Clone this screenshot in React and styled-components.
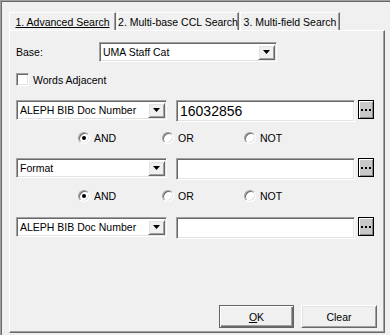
import React from 'react';
import styled, { createGlobalStyle, css } from 'styled-components';

const GlobalStyle = createGlobalStyle`
  html, body {
    margin: 0;
    padding: 0;
    background: #f0f0f0;
  }
`;

const sunken = css`
  border: 1px solid;
  border-color: #a0a0a0 #fff #fff #a0a0a0;
  box-shadow: inset 1px 1px 0 #696969, inset -1px -1px 0 #e3e3e3;
`;

const raised = css`
  border: 1px solid;
  border-color: #fff #696969 #696969 #fff;
  box-shadow: inset 1px 1px 0 #e3e3e3, inset -1px -1px 0 #a0a0a0;
`;

const fields = [
  { name: 'ALEPH BIB Doc Number', value: '16032856' },
  { name: 'Format', value: '' },
  { name: 'ALEPH BIB Doc Number', value: '' },
];

const tabs = [
  { label: '1. Advanced Search', w: 107, active: true },
  { label: '2. Multi-base CCL Search', w: 122 },
  { label: '3. Multi-field Search', w: 100 },
];

export default function App() {
  return (
    <>
      <GlobalStyle />
      <Window>
        <TabStrip>
          {tabs.map((t) => (
            <Tab key={t.label} $w={t.w} $active={t.active}>
              {t.label}
            </Tab>
          ))}
        </TabStrip>
        <Panel>
          <BaseRow>
            <Label>Base:</Label>
            <Select $w={178}>
              <SelectText>UMA Staff Cat</SelectText>
              <DropButton>
                <Arrow />
              </DropButton>
            </Select>
          </BaseRow>
          <CheckRow>
            <CheckBox />
            <span>Words Adjacent</span>
          </CheckRow>
          {fields.map((f, i) => (
            <React.Fragment key={i}>
              <FieldRow $gap={i === 2 ? 15 : 14}>
                <Select $w={151}>
                  <SelectText>{f.name}</SelectText>
                  <DropButton>
                    <Arrow />
                  </DropButton>
                </Select>
                <TextInput>{f.value}</TextInput>
                <DotsButton>
                  <Dot />
                  <Dot />
                  <Dot />
                </DotsButton>
              </FieldRow>
              {i < fields.length - 1 && (
                <RadioRow>
                  <RadioItem $w={84}>
                    <Radio $checked />
                    AND
                  </RadioItem>
                  <RadioItem $w={82}>
                    <Radio />
                    OR
                  </RadioItem>
                  <RadioItem $w={60}>
                    <Radio />
                    NOT
                  </RadioItem>
                </RadioRow>
              )}
            </React.Fragment>
          ))}
          <Spacer />
          <ButtonRow>
            <PushButton $default>
              <u>O</u>K
            </PushButton>
            <PushButton $w={76}>Clear</PushButton>
          </ButtonRow>
        </Panel>
      </Window>
    </>
  );
}

function Arrow() {
  return (
    <svg width='7' height='4' viewBox='0 0 7 4'>
      <polygon points='0,0 7,0 3.5,4' fill='#000' />
    </svg>
  );
}

const Window = styled.div`
  box-sizing: border-box;
  width: 390px;
  height: 335px;
  background: #f0f0f0;
  border-top: 1px solid #a0a0a0;
  border-left: 1px solid #a0a0a0;
  box-shadow: inset 1px 1px 0 #696969;
  padding: 11px 5px 2px 8px;
  display: flex;
  flex-direction: column;
  font-family: 'Liberation Sans', Arial, sans-serif;
  font-size: 10.5px;
  color: #000;
`;
const TabStrip = styled.div`
  display: flex;
  height: 18px;
`;
const Tab = styled.div`
  box-sizing: border-box;
  width: ${(p) => p.$w}px;
  margin-right: 1px;
  border-top: 1px solid #fff;
  border-left: 1px solid #fff;
  border-right: 1px solid #696969;
  box-shadow: inset -1px 0 0 #a0a0a0;
  display: flex;
  align-items: center;
  justify-content: center;
  white-space: nowrap;
  text-decoration: ${(p) => (p.$active ? 'underline' : 'none')};
`;
const Panel = styled.div`
  flex: 1;
  box-sizing: border-box;
  border: 1px solid;
  border-color: #fff #696969 #696969 #fff;
  box-shadow: inset -1px -1px 0 #a0a0a0;
  padding: 11px 7px 4px 6px;
  display: flex;
  flex-direction: column;
`;
const BaseRow = styled.div`
  display: flex;
  align-items: center;
  height: 20px;
`;
const Label = styled.span`
  width: 83px;
`;
const Select = styled.div`
  box-sizing: border-box;
  width: ${(p) => p.$w}px;
  height: 20px;
  background: #fff;
  ${sunken};
  display: flex;
  align-items: center;
  padding: 0 1px 0 3px;
`;
const SelectText = styled.span`
  flex: 1;
  white-space: nowrap;
  overflow: hidden;
`;
const DropButton = styled.div`
  box-sizing: border-box;
  width: 17px;
  height: 15px;
  background: #f0f0f0;
  ${raised};
  display: flex;
  align-items: center;
  justify-content: center;
`;
const CheckRow = styled.label`
  display: flex;
  align-items: center;
  gap: 4px;
  height: 13px;
  margin-top: 11px;
`;
const CheckBox = styled.span`
  box-sizing: border-box;
  width: 13px;
  height: 13px;
  background: #fff;
  ${sunken};
`;
const FieldRow = styled.div`
  display: flex;
  align-items: flex-start;
  height: 22px;
  margin-top: ${(p) => p.$gap}px;
`;
const TextInput = styled.div`
  box-sizing: border-box;
  width: 179px;
  height: 22px;
  margin-left: 9px;
  background: #fff;
  ${sunken};
  padding: 0 3px;
  display: flex;
  align-items: center;
  font-size: 14px;
`;
const DotsButton = styled.div`
  box-sizing: border-box;
  width: 16px;
  height: 19px;
  margin-left: 3px;
  background: #c8c8c8;
  border: 1px solid #000;
  box-shadow: inset 1px 1px 0 #fff, inset -1px -1px 0 #8a8a8a;
  display: flex;
  align-items: center;
  justify-content: center;
  gap: 2px;
`;
const Dot = styled.span`
  width: 2px;
  height: 2px;
  background: #000;
`;
const RadioRow = styled.div`
  display: flex;
  align-items: center;
  height: 13px;
  margin-top: 9px;
  padding-left: 62px;
`;
const RadioItem = styled.label`
  width: ${(p) => p.$w}px;
  display: flex;
  align-items: center;
  gap: 4px;
`;
const Radio = styled.span`
  box-sizing: border-box;
  width: 12px;
  height: 12px;
  border-radius: 50%;
  border: 1px solid;
  border-color: #a0a0a0 #fff #fff #a0a0a0;
  box-shadow: inset 1px 1px 0 #696969, inset -1px -1px 0 #e3e3e3;
  background: #fff;
  display: flex;
  align-items: center;
  justify-content: center;
  &::after {
    content: '';
    width: 4px;
    height: 4px;
    border-radius: 50%;
    background: ${(p) => (p.$checked ? '#000' : 'transparent')};
  }
`;
const Spacer = styled.div`
  flex: 1;
`;
const ButtonRow = styled.div`
  display: flex;
  justify-content: flex-end;
  gap: 7px;
`;
const PushButton = styled.div`
  box-sizing: border-box;
  width: ${(p) => p.$w || 75}px;
  height: 23px;
  background: #f0f0f0;
  display: flex;
  align-items: center;
  justify-content: center;
  ${(p) =>
    p.$default
      ? css`
          border: 1px solid #646464;
          box-shadow: inset 1px 1px 0 #fff, inset -1px -1px 0 #696969,
            inset -2px -2px 0 #a0a0a0;
        `
      : raised};
`;
